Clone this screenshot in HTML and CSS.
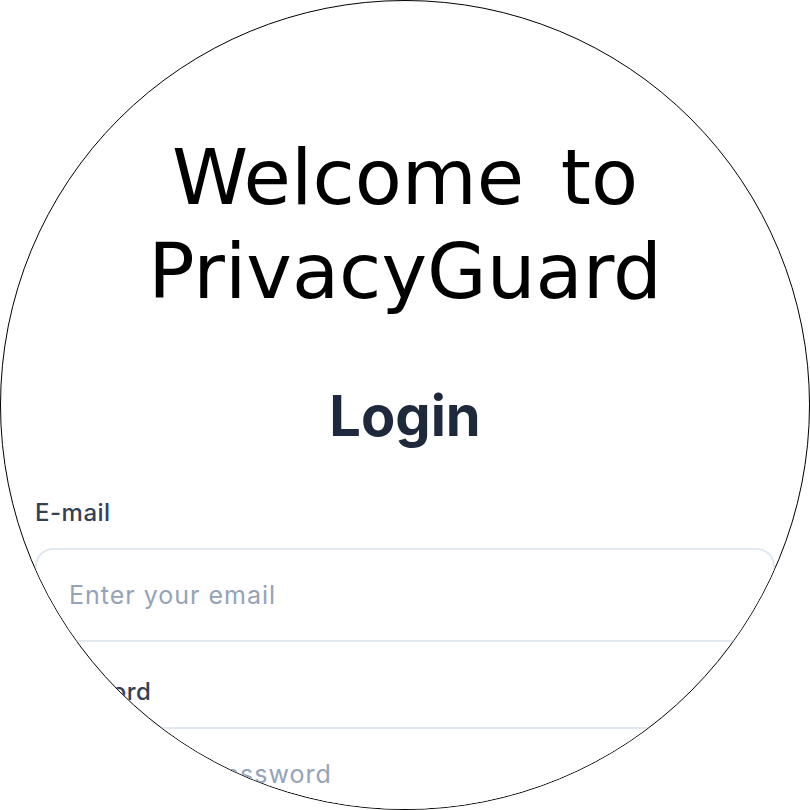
FILE: index.html
```html
<!DOCTYPE html>
<html lang="en">
<head>
<meta charset="utf-8">
<title>PrivacyGuard</title>
<link rel="stylesheet" href="styles.css">
</head>
<body>
<div class="watch">
  <div class="screen">
    <h1 class="title">Welcome to<br>PrivacyGuard</h1>
    <h2 class="heading">Login</h2>
    <form class="form">
      <label class="label" for="email">E-mail</label>
      <input class="input" id="email" type="email" placeholder="Enter your email">
      <label class="label" for="password">Password</label>
      <input class="input" id="password" type="password" placeholder="Enter your password">
    </form>
  </div>
</div>
</body>
</html>
```

FILE: styles.css
```css
html, body {
  margin: 0;
  padding: 0;
  background: #ffffff;
}

.watch {
  width: 810px;
  height: 810px;
  box-sizing: border-box;
  border: 1px solid #000000;
  border-radius: 50%;
  overflow: hidden;
  background: #ffffff;
}

.screen {
  padding: 130px 34px 0 34px;
  display: flex;
  flex-direction: column;
}

.title {
  margin: 0;
  font-family: "DejaVu Sans", "Open Sans", sans-serif;
  font-weight: 400;
  font-size: 77px;
  line-height: 94px;
  word-spacing: 12px;
  color: #000000;
  text-align: center;
}

.heading {
  margin: 65px 0 0 0;
  font-family: Inter, "Liberation Sans", sans-serif;
  font-weight: 700;
  font-size: 56px;
  line-height: 64px;
  color: #1e293b;
  text-align: center;
}

.form {
  margin-top: 50px;
  display: flex;
  flex-direction: column;
}

.label {
  font-family: Inter, "Liberation Sans", sans-serif;
  font-weight: 500;
  font-size: 24px;
  letter-spacing: 0.5px;
  line-height: 30px;
  color: #334155;
  margin-bottom: 20px;
}

.input {
  box-sizing: border-box;
  width: 740px;
  height: 94px;
  border: 2px solid #e2e8f0;
  border-radius: 18px;
  padding: 0 32px;
  font-family: Inter, "Liberation Sans", sans-serif;
  font-size: 25px;
  letter-spacing: 1px;
  color: #1e293b;
  background: #ffffff;
  outline: none;
  margin-bottom: 35px;
}

.input::placeholder {
  color: #94a3b8;
}
```
